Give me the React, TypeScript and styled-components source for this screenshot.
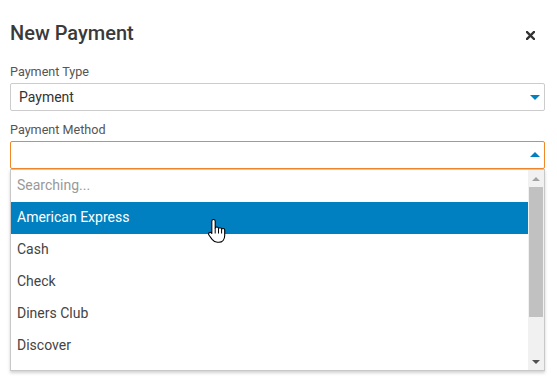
import React from "react";
import styled, { createGlobalStyle } from "styled-components";

const GlobalStyle = createGlobalStyle`
  html, body { margin: 0; padding: 0; background: #fff; }
  body { font-family: Roboto, "Liberation Sans", Arial, sans-serif; color: #333; }
  * { box-sizing: border-box; }
`;

const Dialog = styled.div`
  width: 557px;
  height: 381px;
  padding: 20px 12px 0 10px;
  overflow: hidden;
`;

const Header = styled.div`
  display: flex;
  justify-content: space-between;
  align-items: flex-start;
  height: 24px;
`;

const Title = styled.h2`
  margin: 1px 0 0;
  font-size: 20px;
  line-height: 24px;
  font-weight: 500;
  color: #3a3a3a;
`;

const CloseButton = styled.button`
  display: flex;
  border: 0;
  padding: 0;
  margin: 11px 10px 0 0;
  background: none;
  cursor: pointer;
`;

const Label = styled.div<{ $top: number }>`
  margin-top: ${(p) => p.$top}px;
  margin-bottom: 3px;
  font-size: 12.6px;
  line-height: 16px;
  color: #555;
`;

const Select = styled.div<{ $open?: boolean }>`
  position: relative;
  display: flex;
  align-items: center;
  justify-content: space-between;
  height: 28px;
  padding: 0 4px 0 8px;
  border: 1px solid ${(p) => (p.$open ? "#f0882a" : "#cccccc")};
  border-radius: 2px;
  font-size: 14px;
  color: #333;
  background: #fff;
`;

const Arrow = styled.span<{ $up?: boolean }>`
  width: 0;
  height: 0;
  border-left: 5px solid transparent;
  border-right: 5px solid transparent;
  ${(p) =>
    p.$up
      ? "border-bottom: 5px solid #0080c0; margin-top: -1px;"
      : "border-top: 5px solid #0080c0; margin-top: 1px;"}
`;

const Dropdown = styled.div`
  position: relative;
  display: flex;
  height: 202px;
  border: 1px solid #c8c8c8;
  background: #fff;
  box-shadow: 0 2px 3px rgba(0, 0, 0, 0.18);
`;

const List = styled.div`
  flex: 1;
  overflow: hidden;
`;

const Option = styled.div<{ $active?: boolean; $muted?: boolean }>`
  height: 32px;
  line-height: 30px;
  padding-left: 6px;
  font-size: 14px;
  background: ${(p) => (p.$active ? "#0080c0" : "transparent")};
  color: ${(p) => (p.$active ? "#fff" : p.$muted ? "#999" : "#444")};
  white-space: nowrap;
`;

const ScrollTrack = styled.div`
  width: 16px;
  background: #f1f1f1;
  display: flex;
  flex-direction: column;
  align-items: center;
`;

const ScrollButton = styled.div<{ $up?: boolean; $dark?: boolean }>`
  height: 17px;
  width: 100%;
  display: flex;
  align-items: center;
  justify-content: center;
  &::after {
    content: "";
    width: 0;
    height: 0;
    border-left: 4px solid transparent;
    border-right: 4px solid transparent;
    ${(p) =>
      p.$up
        ? `border-bottom: 4px solid ${p.$dark ? "#505050" : "#a3a3a3"};`
        : `border-top: 4px solid ${p.$dark ? "#505050" : "#a3a3a3"};`}
  }
`;

const ScrollThumb = styled.div`
  width: 14px;
  height: 130px;
  background: #c1c1c1;
`;

const ScrollSpacer = styled.div`
  flex: 1;
`;

const Cursor = styled.svg`
  position: absolute;
  left: 196px;
  top: 48px;
`;

const options = ["American Express", "Cash", "Check", "Diners Club", "Discover"];

export default function App() {
  return (
    <>
      <GlobalStyle />
      <Dialog>
        <Header>
          <Title>New Payment</Title>
          <CloseButton aria-label="Close">
            <svg width="9" height="9" viewBox="0 0 9 9">
              <path d="M1 1 L8 8 M8 1 L1 8" stroke="#333" strokeWidth="2.4" strokeLinecap="square" />
            </svg>
          </CloseButton>
        </Header>

        <Label $top={20}>Payment Type</Label>
        <Select>
          <span>Payment</span>
          <Arrow />
        </Select>

        <Label $top={11}>Payment Method</Label>
        <Select $open>
          <span />
          <Arrow $up />
        </Select>
        <Dropdown>
          <List>
            <Option $muted>Searching...</Option>
            {options.map((o, i) => (
              <Option key={o} $active={i === 0}>
                {o}
              </Option>
            ))}
          </List>
          <ScrollTrack>
            <ScrollButton $up />
            <ScrollThumb />
            <ScrollSpacer />
            <ScrollButton $dark />
          </ScrollTrack>
          <Cursor width="20" height="26" viewBox="0 0 20 26">
            <path
              d="M6.5 1.5 C7.6 1.5 8.2 2.2 8.2 3.2 L8.2 10 C8.6 9.3 9.2 9 9.9 9 C10.8 9 11.4 9.6 11.5 10.4 C11.9 9.9 12.4 9.7 13 9.7 C13.9 9.7 14.5 10.3 14.6 11.1 C15 10.7 15.4 10.5 16 10.5 C17 10.5 17.7 11.3 17.7 12.3 L17.7 17.5 C17.7 21.3 15.5 24.3 11.8 24.3 L10.4 24.3 C8 24.3 6.5 23.2 5.1 21.4 L1.9 17 C1.3 16.2 1.5 15.2 2.2 14.7 C2.9 14.2 3.8 14.3 4.4 15 L4.8 15.5 L4.8 3.2 C4.8 2.2 5.4 1.5 6.5 1.5 Z"
              fill="#fff"
              stroke="#000"
              strokeWidth="1.1"
              strokeLinejoin="round"
            />
            <path d="M8.2 10 L8.2 15.5 M11.5 10.4 L11.5 15.5 M14.6 11.1 L14.6 15.5" stroke="#000" strokeWidth="1" />
          </Cursor>
        </Dropdown>
      </Dialog>
    </>
  );
}
